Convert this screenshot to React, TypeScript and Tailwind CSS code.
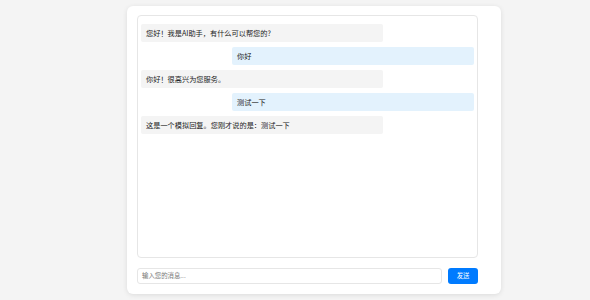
import React from "react";

const messages: { role: "ai" | "user"; text: string }[] = [
  { role: "ai", text: "您好！我是AI助手，有什么可以帮您的?" },
  { role: "user", text: "你好" },
  { role: "ai", text: "你好！很高兴为您服务。" },
  { role: "user", text: "测试一下" },
  { role: "ai", text: "这是一个模拟回复。您刚才说的是：测试一下" },
];

export default function App() {
  return (
    <div
      className="w-[590px] h-[300px] bg-[#f4f4f4] pt-[6px]"
      style={{ fontFamily: '"Noto Sans CJK SC", "Noto Sans", sans-serif' }}
    >
      <div className="ml-[127px] w-[374px] h-[288px] bg-white rounded-[6px] shadow-[0_1px_5px_rgba(0,0,0,0.10)] pt-[9px] pl-[10px] pr-[23px] pb-[10px] flex flex-col">
        <div className="h-[243px] border border-[#e6e6e6] rounded-[4px] pt-[8px] px-[3px] flex flex-col gap-[5px]">
          {messages.map((m, i) => (
            <div
              key={i}
              className={
                m.role === "ai"
                  ? "w-[242px] h-[18px] bg-[#f4f4f4] rounded-[2px] flex items-center pl-[5px] text-[7.2px] text-[#222] self-start"
                  : "w-[242px] h-[18px] bg-[#e3f2fd] rounded-[2px] flex items-center pl-[5px] text-[7.2px] text-[#222] self-end"
              }
            >
              {m.text}
            </div>
          ))}
        </div>
        <div className="mt-[10px] flex gap-[6px] h-[16px]">
          <div className="w-[306px] h-[16px] border border-[#e6e6e6] rounded-[3px] flex items-center pl-[4px] text-[6.4px] text-[#777]">
            输入您的消息...
          </div>
          <div className="w-[30px] h-[16px] bg-[#007bff] rounded-[3px] flex items-center justify-center text-[6.4px] text-white">
            发送
          </div>
        </div>
      </div>
    </div>
  );
}
